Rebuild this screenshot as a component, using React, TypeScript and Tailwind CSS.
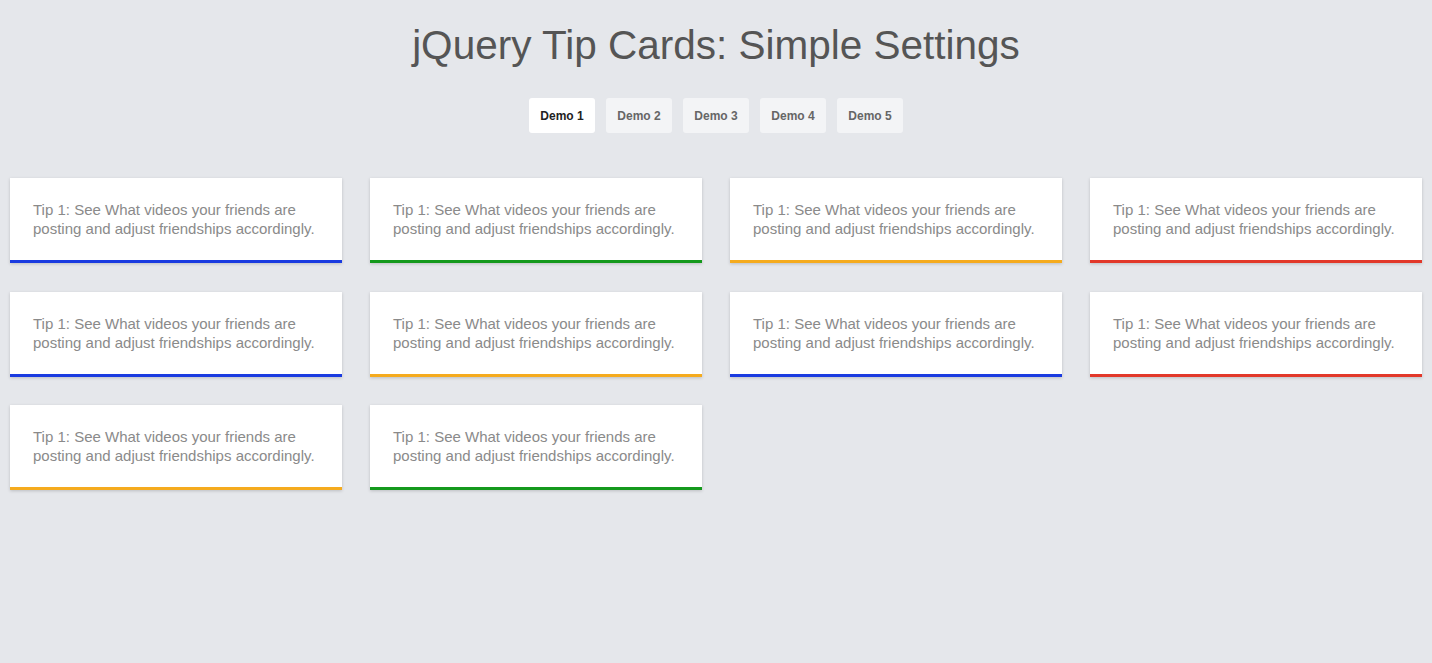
const tipText = 'Tip 1: See What videos your friends are posting and adjust friendships accordingly.'

const cards = [
    'border-[#1a3be0]',
    'border-[#14991c]',
    'border-[#f5ab1e]',
    'border-[#e2382a]',
    'border-[#1a3be0]',
    'border-[#f5ab1e]',
    'border-[#1a3be0]',
    'border-[#e2382a]',
    'border-[#f5ab1e]',
    'border-[#14991c]',
]

const demos = ['Demo 1', 'Demo 2', 'Demo 3', 'Demo 4', 'Demo 5']

export default function App() {
    return (
        <div className="min-h-[663px] bg-[#e5e7eb] font-['Liberation_Sans',Arial,sans-serif]">
            {/* Title */}
            <h1 className="pt-[22px] text-center text-[40.5px] leading-[46px] text-[#555]">
                jQuery Tip Cards: Simple Settings
            </h1>

            {/* Demo tabs */}
            <div className="mt-[30px] flex justify-center gap-[11px]">
                {demos.map((d, i) => (
                    <button
                        key={d}
                        className={
                            i === 0
                                ? 'h-[35px] w-[66px] rounded-[3px] bg-white text-[12px] font-bold text-[#222]'
                                : 'h-[35px] w-[66px] rounded-[3px] bg-[#f3f4f6] text-[12px] font-bold text-[#666]'
                        }
                    >
                        {d}
                    </button>
                ))}
            </div>

            {/* Cards */}
            <div className="mt-[45px] grid grid-cols-4 gap-x-[28px] gap-y-[28.5px] px-[10px]">
                {cards.map((c, i) => (
                    <div
                        key={i}
                        className={`border-b-[3px] bg-white px-[23px] py-[22px] shadow-[0_1px_3px_rgba(0,0,0,0.18)] ${c}`}
                    >
                        <p className="text-[15px] leading-[19px] text-[#8a8a8a]">{tipText}</p>
                    </div>
                ))}
            </div>
        </div>
    )
}
